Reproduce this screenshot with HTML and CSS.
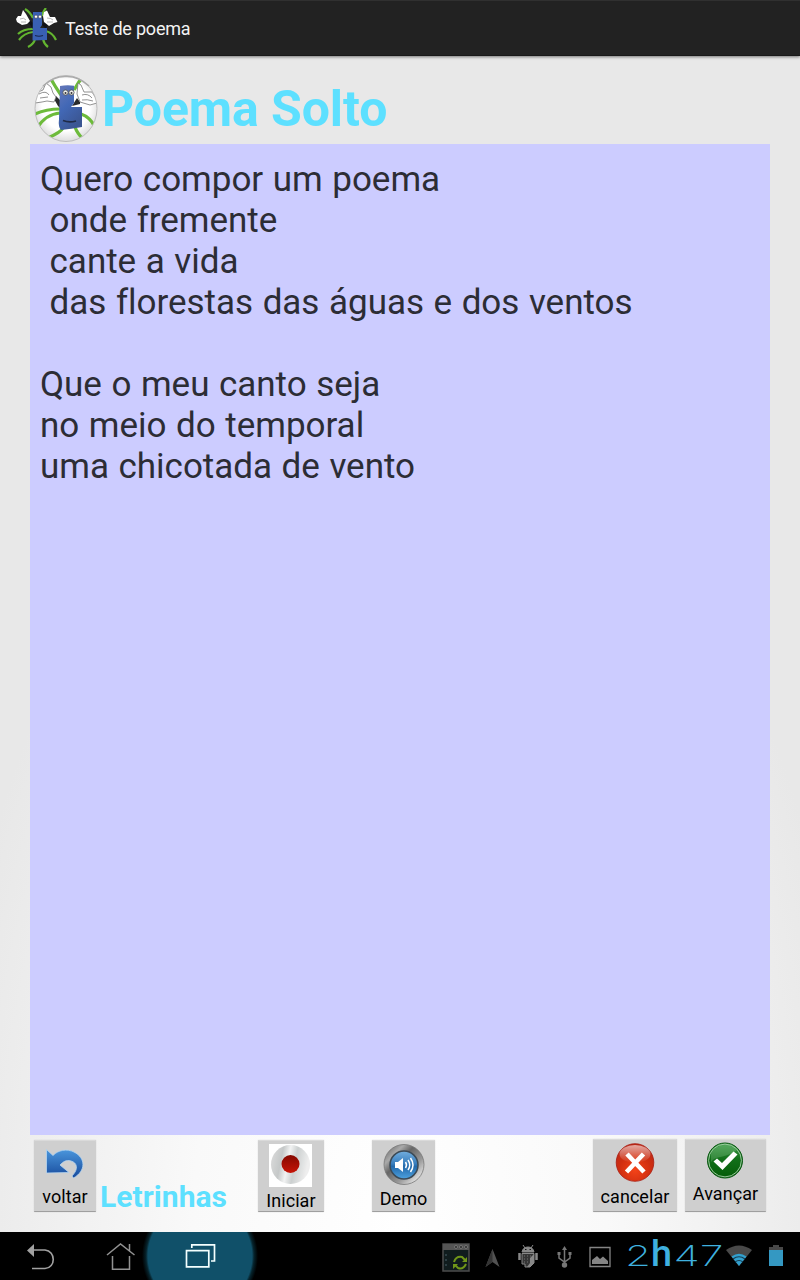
FILE: index.html
```html
<!DOCTYPE html>
<html lang="pt">
<head>
<meta charset="utf-8">
<title>Teste de poema</title>
<link rel="stylesheet" href="styles.css">
</head>
<body>
<div class="screen">
  <header class="appbar">
    <svg class="appbar-icon" width="42" height="40" viewBox="0 0 42 40">
      <g fill="none" stroke="#63b52f" stroke-width="2.200">
        <path d="M9 1Q14 4 17 10M30 0Q27 3 26 8M17 21Q7 21 2 26M17 24Q8 25 3 32M19 31Q18 36 12 39M27 31Q28 36 32 39M30 23Q37 25 40 32"/>
      </g>
      <path d="M12 14L15 13L18 16L17 21ZM26 17L29 13L32 16L30 21Z" fill="#101218"/>
      <path d="M17 4L26 4L26 17L24 20L31 20L31 32L16.500 32.500Z" fill="#3960b3"/>
      <path d="M0 11L2 8L5 8L7 2L10 6L14 13L11 16L6 17L1 14Z" fill="#fff"/>
      <path d="M28 14L27 8L28 4L31 2.500L34 9L39 9L41.500 14L38 15L33 18Z" fill="#fff"/>
      <path d="M4 11Q8 9 10 12M5 14L10 14M31 10Q35 10 37 12M31 14L37 14" fill="none" stroke="#888" stroke-width=".6"/>
      <g fill="#fff" stroke="#333" stroke-width=".5"><circle cx="20" cy="8.700" r="1.600"/><circle cx="24" cy="8.700" r="1.600"/></g>
      <path d="M19 27.500Q23 29 27 27.500" fill="none" stroke="#172449" stroke-width="1.200"/>
    </svg>
    <span class="appbar-title">Teste de poema</span>
  </header>

  <main class="page">
    <div class="heading">
      <svg class="heading-icon" width="64" height="68" viewBox="0 0 64 68">
        <defs>
          <radialGradient id="badge" cx=".5" cy=".45" r=".55"><stop offset=".7" stop-color="#fff"/><stop offset="1" stop-color="#ddd"/></radialGradient>
          <linearGradient id="body" x2=".5" y2="1"><stop stop-color="#6678b9"/><stop offset=".5" stop-color="#4268b6"/><stop offset="1" stop-color="#3b5693"/></linearGradient>
          <clipPath id="oval"><ellipse cx="32" cy="33.500" rx="31" ry="33"/></clipPath>
        </defs>
        <ellipse cx="32" cy="33.500" rx="31" ry="33" fill="url(#badge)"/>
        <g clip-path="url(#oval)">
          <path d="M16 2Q20 10 27 20M49 1Q44 8 40 15M26 38Q12 39 3 53M26 34Q12 34 1 39M29 53Q27 57 14 63M41 52Q43 58 49 64M47 39Q56 42 61 52" fill="none" stroke="#6dbb3b" stroke-width="3.200"/>
          <path d="M20 24L22 21L27 26L26 33L24 31ZM38 31L43 23L46 27L46 29Z" fill="#292b2c"/>
          <path d="M26 11Q33 9.500 40 10.700L40 28L37 32L48 32L48 52Q37 54 27 55Q24 52 25 44Z" fill="url(#body)"/>
          <g fill="#fff" stroke="#777" stroke-width=".8"><path d="M1 28Q1 20 4 17L9 15L12 8L17 12L19 18L22 22L20 27L13 26L8 27ZM44 8L47 10L50 17L58 17L63 25L63 28L56 30L46 27L43 19Z"/><path d="M5 19Q12 15 15 20M6 23L14 22M48 20Q54 18 58 23M48 25Q53 24 59 26" fill="none"/></g>
          <g fill="#ececec" stroke="#52534e" stroke-width=".8"><circle cx="31.500" cy="17.500" r="2.600"/><circle cx="37.500" cy="17.500" r="2.600"/></g>
          <circle cx="31.500" cy="18" r="1" fill="#333"/><circle cx="37.500" cy="18" r="1" fill="#333"/>
          <path d="M29 45.500Q35 48 42 46" fill="none" stroke="#202c49" stroke-width="1.800"/>
        </g>
        <ellipse cx="32" cy="33.500" rx="31" ry="33" fill="none" stroke="#bdbdbd"/>
        <path d="M9 11Q20 1 32 1.500Q44 1 55 11" fill="none" stroke="#aaa" stroke-width="1.600"/>
      </svg>
      <h1 class="title">Poema Solto</h1>
    </div>

    <div class="poem">Quero compor um poema
 onde fremente
 cante a vida
 das florestas das águas e dos ventos

Que o meu canto seja
no meio do temporal
uma chicotada de vento</div>

    <footer class="actions">
      <button class="btn btn-back">
        <svg width="40" height="30" viewBox="0 0 40 30">
          <defs><linearGradient id="arrow" x2="0" y2="1"><stop stop-color="#4a96dc"/><stop offset="1" stop-color="#174a9c"/></linearGradient></defs>
          <path d="M1.500 .5L8 6.500C13 1 22 -.5 29 3C41 9 41 22 28.500 29L27 27C34 20 32 13.500 26 12C21 10.500 18 13 15 16L24 23.500L1.500 24Z" fill="url(#arrow)" stroke="#b6d6f0" stroke-width=".8"/>
        </svg>
        <span>voltar</span>
      </button>
      <span class="brand">Letrinhas</span>
      <button class="btn btn-start">
        <svg width="43" height="43" viewBox="0 0 43 43">
          <defs><linearGradient id="silver" x2="1" y2=".2"><stop stop-color="#ddd"/><stop offset=".32" stop-color="#c5c8c8"/><stop offset=".5" stop-color="#f2f3f3"/><stop offset=".68" stop-color="#ccd0d0"/><stop offset="1" stop-color="#eee"/></linearGradient>
          <linearGradient id="rec" x2="0" y2="1"><stop stop-color="#850900"/><stop offset="1" stop-color="#c61407"/></linearGradient></defs>
          <path d="M0 0H43V43H0Z" fill="#fff"/><circle cx="21.500" cy="20.500" r="19.500" fill="url(#silver)"/><circle cx="21.500" cy="20" r="9" fill="url(#rec)"/>
        </svg>
        <span>Iniciar</span>
      </button>
      <button class="btn btn-demo">
        <svg width="42" height="42" viewBox="0 0 42 42">
          <defs><linearGradient id="metal" x2="1" y2="1"><stop stop-color="#555"/><stop offset=".25" stop-color="#aaa"/><stop offset=".4" stop-color="#666"/><stop offset=".65" stop-color="#999"/><stop offset=".85" stop-color="#ddd"/><stop offset="1" stop-color="#555"/></linearGradient>
          <linearGradient id="blue" x2="0" y2="1"><stop stop-color="#73afdf"/><stop offset=".45" stop-color="#397ebd"/><stop offset=".55" stop-color="#2369ab"/><stop offset="1" stop-color="#4da2df"/></linearGradient></defs>
          <circle cx="21" cy="20.500" r="20" fill="url(#metal)" stroke="#777" stroke-width=".8"/><circle cx="21" cy="21" r="14" fill="url(#blue)" stroke="#3c4a56" stroke-width="1.500"/>
          <path d="M12 18H15L20 14V28L15 24H12Z" fill="#fff"/><path d="M22.500 18Q24.500 21 22.500 24M25 16Q28.500 21 25 26M27.500 14Q32.500 21 27.500 28" fill="none" stroke="#fff" stroke-width="1.500"/>
        </svg>
        <span>Demo</span>
      </button>
      <button class="btn btn-cancel">
        <svg width="40" height="40" viewBox="0 0 40 40">
          <defs><radialGradient id="red" cx=".5" cy=".7" r=".75"><stop stop-color="#f44318"/><stop offset=".55" stop-color="#d02e10"/><stop offset="1" stop-color="#b5281a"/></radialGradient>
          <linearGradient id="gloss" x2="0" y2="1"><stop stop-color="#fff" stop-opacity=".6"/><stop offset="1" stop-color="#fff" stop-opacity="0"/></linearGradient></defs>
          <circle cx="20" cy="19.500" r="18.800" fill="url(#red)" stroke="#a81b10" stroke-width=".8"/><ellipse cx="20" cy="11" rx="15.500" ry="9" fill="url(#gloss)"/>
          <path d="M12 11L29 29M28.500 11L11.500 29" stroke="#fff" stroke-width="4.600"/>
        </svg>
        <span>cancelar</span>
      </button>
      <button class="btn btn-next">
        <svg width="38" height="38" viewBox="0 0 38 38">
          <defs><linearGradient id="green" x2="0" y2="1"><stop stop-color="#3f9c49"/><stop offset=".45" stop-color="#12701a"/><stop offset="1" stop-color="#045c08"/></linearGradient></defs>
          <circle cx="19" cy="18.500" r="17.500" fill="url(#green)" stroke="#0a5712"/><circle cx="19" cy="18.500" r="16.400" fill="none" stroke="#a8d2aa" stroke-width=".9"/>
          <path d="M5 20C10 13 22 16 31 8C24 0 9 2 5 12Z" fill="#a5d6a6" opacity=".25"/>
          <path d="M7.500 19.500L11 16.500L16 21L27.500 9.500L31.500 12.500L16.500 28Z" fill="#fff"/>
        </svg>
        <span>Avançar</span>
      </button>
    </footer>
  </main>

  <nav class="sysbar">
    <div class="keys">
      <div class="key"><svg width="80" height="48" viewBox="0 0 80 48"><path d="M33 18H45C56 19 56 36 45 36.500H32" fill="none" stroke="#a1a1a1" stroke-width="1.600"/><path d="M27 18.500L34 12V25Z" fill="#a1a1a1"/></svg></div>
      <div class="key"><svg width="80" height="48" viewBox="0 0 80 48"><path d="M27 23L40.500 12L54.500 23M49.500 19V12M32.500 24V37.200H49.500V24" fill="none" stroke="#929292" stroke-width="1.500"/></svg></div>
      <div class="key key-recent"><svg width="80" height="48" viewBox="0 0 80 48"><path d="M26.500 18.700H48.800V34.800H26.500ZM31.800 16V12.800H54.500V29H51" fill="none" stroke="#f4ffff" stroke-width="1.700"/></svg></div>
    </div>
    <div class="status">
      <svg width="180" height="48" viewBox="440 1232 180 48">
        <path d="M443 1244H469V1271H443Z" fill="#101c1d" stroke="#4c4c4c" stroke-width="1.500"/><path d="M443 1244H469V1250H443Z" fill="#555"/>
        <path d="M446 1254V1268" stroke="#48616a" stroke-dasharray="2 3"/><g fill="#292929" stroke="#888" stroke-width=".7"><circle cx="456" cy="1247" r="1.500"/><circle cx="461" cy="1247" r="1.500"/><circle cx="466" cy="1247" r="1.500"/></g>
        <path d="M454 1262Q456 1256 462 1257L465 1260M466 1264Q463 1270 458 1268L455 1265" fill="none" stroke="#709719" stroke-width="2"/><path d="M467 1257V1262H462ZM453 1269V1264H458Z" fill="#709719"/>
        <path d="M492.500 1249L485.500 1267L492.500 1262L499.500 1267Z" fill="#525252"/><path d="M492.500 1249V1262L485.500 1267Z" fill="#343434"/>
        <path d="M522 1252Q523 1247 528 1247Q533 1247 534 1252ZM523 1245L525 1248M533 1245L531 1248" fill="#888" stroke="#888"/><path d="M519.500 1253V1260M536.500 1253V1260" stroke="#888" stroke-width="2.500"/><path d="M525 1249.500H526.500M529.500 1249.500H531" stroke="#111"/>
        <path d="M522 1253.500H534V1263L530 1267H525V1264H522Z" fill="#353535" stroke="#888"/><path d="M524 1256H531M524 1259H531M524 1262H531" stroke="#777" stroke-dasharray="1 2"/><path d="M534 1254V1263L530 1267H527L530 1263V1258Z" fill="#888"/>
        <path d="M564.500 1250V1265M559 1254V1258L564.500 1262L570 1258V1254" fill="none" stroke="#777" stroke-width="1.500"/><path d="M564.500 1246L567 1250H562ZM557.500 1252H560.500V1255H557.500ZM568.500 1252H571.500V1255H568.500Z" fill="#777"/><circle cx="564.500" cy="1265" r="2.700" fill="#777"/>
        <path d="M590 1247.500H610V1266.500H590Z" fill="none" stroke="#858585" stroke-width="1.300"/><path d="M592 1264V1260L597 1256L600 1259L603 1256.500L608 1261V1264Z" fill="#858585"/>
      </svg>
      <svg class="clock" width="180" height="48" viewBox="620 1232 180 48">
        <g fill="#3fb0df"><text x="625" y="1266" textLength="26" lengthAdjust="spacingAndGlyphs" class="digit">2</text><text x="651" y="1266" textLength="21" lengthAdjust="spacingAndGlyphs" class="hour">h</text><text x="673.500" y="1266" textLength="50" lengthAdjust="spacingAndGlyphs" class="digit">47</text></g>
        <path d="M739 1266L726 1250Q739 1241 752 1250Z" fill="#494949"/><path d="M739 1266L731.500 1256.500Q739 1251 746.500 1256.500Z" fill="#32a0ce"/><path d="M733 1259Q739 1254.500 745 1259M735 1262Q739 1259 743 1262" fill="none" stroke="#153c50" stroke-width="1.200"/>
        <path d="M769 1247H773V1245H779V1247H783V1251H769Z" fill="#484848"/><path d="M769 1250H783V1266H769Z" fill="#3498c2"/>
      </svg>
    </div>
  </nav>
</div>
</body>
</html>
```
FILE: styles.css
```css
* { box-sizing: border-box; }
body { margin: 0; font-family: Roboto, "Noto Sans", sans-serif; }
.screen { width: 800px; height: 1280px; display: flex; flex-direction: column; overflow: hidden; }
.appbar { height: 56px; flex: none; display: flex; align-items: center; gap: 7px; padding: 0 16px; background: #222; border-top: 1px solid #303030; border-bottom: 1px solid #191919; color: #f3f3f3; box-shadow: 0 1px 3px #777; z-index: 1; }
.appbar-title { font-size: 18px; letter-spacing: -.2px; line-height: 24px; padding-top: 2px; }
.page { flex: 1; min-height: 0; display: flex; flex-direction: column; padding: 0 30px; background: radial-gradient(ellipse 460px 850px at 50% 100%, #fff 0%, #f9f9f9 45%, #e8e8e8 100%); }
.heading { height: 88px; flex: none; display: flex; gap: 4px; padding: 19px 0 0 4px; }
.title { margin: 0; padding-top: 1px; font-size: 50px; line-height: 66px; font-weight: 700; color: #5de0ff; letter-spacing: -.1px; }
.poem { height: 991px; flex: none; padding: 15px 10px; background: #ccccff; color: #2c2d35; font-size: 35px; line-height: 41px; letter-spacing: -.02px; word-spacing: .9px; white-space: pre; }
.actions { flex: 1; display: flex; align-items: flex-start; padding: 4px 4px 0; }
.btn { display: flex; flex-direction: column; align-items: center; height: 73px; padding: 5px 0 0; border: 0; border-bottom: 1px solid #9f9f9f; border-radius: 1px; background: #cfcfcf; box-shadow: inset 0 1px #dadada, 0 0 1px #aaa; color: #000; font: 18px/22px Roboto, sans-serif; letter-spacing: .05px; flex: none; }
.btn svg { flex: none; }
.btn-back { width: 62px; height: 72px; margin-top: 1px; padding-top: 9px; gap: 7px; }
.brand { flex: none; width: 128px; margin: 40px 30px 0 4px; color: #5de0ff; font-size: 30px; line-height: 36px; font-weight: 700; letter-spacing: .05px; }
.btn-start { width: 66px; height: 72px; margin-top: 1px; padding-top: 4px; gap: 3px; }
.btn-start svg { margin-left: -1px; }
.btn-demo { width: 63px; height: 72px; margin: 1px 158px 0 48px; padding-top: 4px; gap: 2px; }
.btn-cancel { width: 84px; padding-top: 4px; gap: 3px; }
.btn-next { width: 81px; margin-left: 8px; padding-top: 3px; gap: 3px; }
.btn-next svg { margin-left: -2px; }
.sysbar { height: 48px; flex: none; display: flex; justify-content: space-between; background: #000; }
.keys, .status { display: flex; }
.key { width: 80px; height: 48px; }
.key-recent { width: 120px; margin-left: -20px; padding-left: 20px; background: radial-gradient(circle at 50% 50%, #105069 0 52px, #06242d 54px, #000 58px); }
.digit { font: 200 28px Inter, Roboto, sans-serif; }
.hour { font: 500 36px Roboto, sans-serif; }
```
